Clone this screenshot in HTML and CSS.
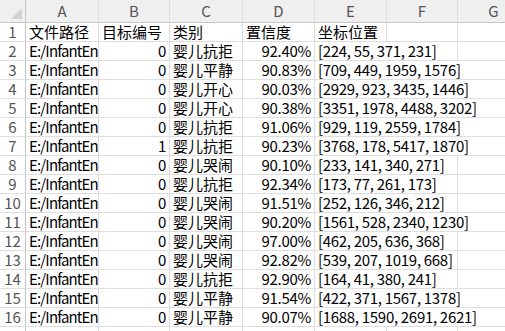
FILE: index.html
```html
<!DOCTYPE html>
<html lang="zh-CN">
<head>
    <meta charset="UTF-8">
    <meta name="viewport" content="width=device-width, initial-scale=1.0">
    <title>识别结果</title>
    <link rel="stylesheet" href="styles.css">
</head>
<body>
    <div class="sheet">
        <div class="corner"><span class="tri"></span></div>
        <div class="col-head">A</div>
        <div class="col-head">B</div>
        <div class="col-head">C</div>
        <div class="col-head">D</div>
        <div class="col-head">E</div>
        <div class="col-head">F</div>
        <div class="col-head">G</div>

        <div class="row-head">1</div>
        <div class="cell">文件路径</div>
        <div class="cell">目标编号</div>
        <div class="cell">类别</div>
        <div class="cell">置信度</div>
        <div class="cell">坐标位置</div>
        <div class="cell"></div>
        <div class="cell"></div>
    </div>

    <script>
        const rows = [
            ["0", "婴儿抗拒", "92.40%", "[224, 55, 371, 231]"],
            ["0", "婴儿平静", "90.83%", "[709, 449, 1959, 1576]"],
            ["0", "婴儿开心", "90.03%", "[2929, 923, 3435, 1446]"],
            ["0", "婴儿开心", "90.38%", "[3351, 1978, 4488, 3202]"],
            ["0", "婴儿抗拒", "91.06%", "[929, 119, 2559, 1784]"],
            ["1", "婴儿抗拒", "90.23%", "[3768, 178, 5417, 1870]"],
            ["0", "婴儿哭闹", "90.10%", "[233, 141, 340, 271]"],
            ["0", "婴儿抗拒", "92.34%", "[173, 77, 261, 173]"],
            ["0", "婴儿哭闹", "91.51%", "[252, 126, 346, 212]"],
            ["0", "婴儿哭闹", "90.20%", "[1561, 528, 2340, 1230]"],
            ["0", "婴儿哭闹", "97.00%", "[462, 205, 636, 368]"],
            ["0", "婴儿哭闹", "92.82%", "[539, 207, 1019, 668]"],
            ["0", "婴儿抗拒", "92.90%", "[164, 41, 380, 241]"],
            ["0", "婴儿平静", "91.54%", "[422, 371, 1567, 1378]"],
            ["0", "婴儿平静", "90.07%", "[1688, 1590, 2691, 2621]"]
        ];

        const sheet = document.querySelector(".sheet");
        let html = "";
        rows.forEach((r, i) => {
            html += '<div class="row-head">' + (i + 2) + '</div>';
            html += '<div class="cell path">E:/InfantEn</div>';
            html += '<div class="cell num latin">' + r[0] + '</div>';
            html += '<div class="cell">' + r[1] + '</div>';
            html += '<div class="cell num latin">' + r[2] + '</div>';
            html += '<div class="cell spill latin"><span>' + r[3] + '</span></div>';
            html += '<div class="cell"></div>';
            html += '<div class="cell"></div>';
        });
        html += '<div class="row-head"></div>';
        for (let c = 0; c < 7; c++) html += '<div class="cell"></div>';
        sheet.insertAdjacentHTML("beforeend", html);
    </script>
</body>
</html>
```

FILE: styles.css
```css
body {
    margin: 0;
    background: #fff;
    overflow: hidden;
    font-family: "Noto Sans CJK SC", "Noto Sans", sans-serif;
    font-size: 15px;
    color: #000;
}
.sheet {
    display: grid;
    grid-template-columns: 26px 73px 71px 73px 72px 72px 71px 72px;
    grid-template-rows: 23px;
    grid-auto-rows: 19px;
    width: 530px;
}
.corner, .col-head {
    background: #efefef;
    border-bottom: 1px solid #c6c6c6;
    box-sizing: border-box;
}
.corner {
    position: relative;
    border-right: 1px solid #c6c6c6;
}
.tri {
    position: absolute;
    right: 3px;
    bottom: 3px;
    width: 0;
    height: 0;
    border-left: 11px solid transparent;
    border-bottom: 11px solid #d2d2d2;
}
.col-head {
    border-right: 1px solid #dedede;
    color: #555;
    text-align: center;
    line-height: 22px;
}
.row-head {
    border-right: 1px solid #c6c6c6;
    border-bottom: 1px solid #dedede;
    box-sizing: border-box;
    color: #555;
    text-align: center;
    line-height: 18px;
}
.cell {
    border-right: 1px solid #dedede;
    border-bottom: 1px solid #dedede;
    box-sizing: border-box;
    padding: 0 3px 0 3px;
    line-height: 18px;
    white-space: nowrap;
}
.latin {
    letter-spacing: -0.3px;
}
.path {
    letter-spacing: -0.85px;
}
.num {
    text-align: right;
}
.spill {
    border-right-color: transparent;
    overflow: visible;
}
/* text running into the empty cells hides their grid lines */
.spill span {
    position: relative;
    z-index: 1;
    display: inline-block;
    height: 18px;
    padding-right: 2px;
    background: #fff;
    vertical-align: top;
}
```
